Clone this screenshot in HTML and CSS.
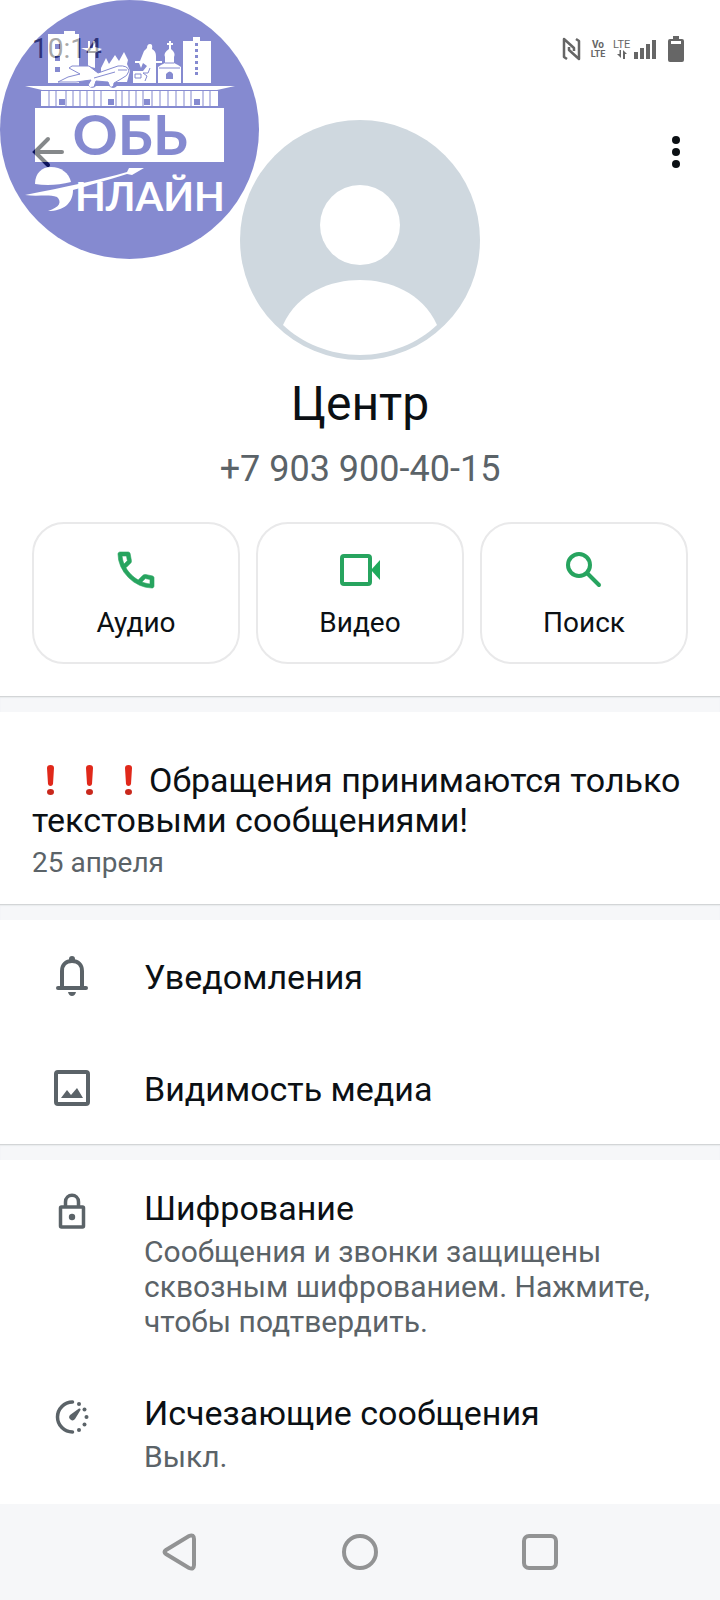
FILE: index.html
```
<!DOCTYPE html>
<html lang="ru">
<head>
  <meta charset="UTF-8" />
  <meta name="viewport" content="width=device-width, initial-scale=1" />
  <title>Центр</title>
  <link rel="stylesheet" href="styles.css">
</head>
<body>

<div class="status-bar">
  <span class="clock">10:14</span>
  <div class="status-icons">
    <svg class="nfc" width="20" height="28" viewBox="0 0 20 28" fill="none" stroke="#666" stroke-width="2.500" stroke-linejoin="round">
      <path d="M5 24 L2 22 V4 L12 13 V16"/>
      <path d="M14 4 L17 6 V24 L7 15 V12"/>
    </svg>
    <svg width="16" height="28" viewBox="0 0 16 28" class="status-text volte-icon">
      <text x="8" y="13" text-anchor="middle" class="volte">Vo</text>
      <text x="8" y="22" text-anchor="middle" class="volte-sub">LTE</text>
    </svg>
    <svg width="44" height="28" viewBox="0 0 44 28" fill="#666" class="status-text">
      <text x="0" y="13" class="lte">LTE</text>
      <path d="M8 15 V23 L4 19 H6.500 V15 Z M10 24 V15 L14 19 H12 V24 Z"/>
      <path d="M21 17 h4 v7 h-4z M27 13 h4 v11 h-4z M33 9 h4 v15 h-4z M39 5 h4 v19 h-4z"/>
    </svg>
    <svg class="battery" width="16" height="28" viewBox="0 0 16 28">
      <path fill="#666" fill-rule="evenodd" d="M5 1 H11 V4 H14 Q16 4 16 6 V25 Q16 27 14 27 H2 Q0 27 0 25 V6 Q0 4 2 4 H5 Z M3 6 V9 H13 V6 Z"/>
    </svg>
  </div>
</div>

<div class="profile">
  <div class="profile-top">
    <button class="icon-btn" aria-label="Назад">
      <svg width="48" height="48" viewBox="0 0 48 48" fill="none" stroke="#0b1014" stroke-width="4" stroke-linecap="round">
        <path d="M15 24 H42 M28 11 L15 24 L28 37"/>
      </svg>
    </button>
    <svg class="avatar" width="240" height="240" viewBox="0 0 240 240">
      <circle cx="120" cy="120" r="120" fill="#cfd8df"/>
      <circle cx="120" cy="105" r="40" fill="#fff"/>
      <path fill="#fff" d="M43 205 C58 172 91 160 120 160 C149 160 182 172 197 205 C178 223 150 235 120 235 C90 235 62 223 43 205 Z"/>
    </svg>
    <button class="icon-btn" aria-label="Ещё">
      <svg width="48" height="48" viewBox="0 0 48 48" fill="#0b1014">
        <circle cx="24" cy="12" r="4"/>
        <circle cx="24" cy="24" r="4"/>
        <circle cx="24" cy="36" r="4"/>
      </svg>
    </button>
  </div>
  <h1 class="name">Центр</h1>
  <div class="phone">+7 903 900-40-15</div>
  <div class="actions">
    <button class="action">
      <svg width="48" height="48" viewBox="0 0 24 24" fill="#27a45f" stroke="#27a45f" stroke-width=".3">
        <path d="M19.950 21q-3.125 0-6.175-1.362t-5.550-3.863q-2.500-2.500-3.862-5.550T3 4.050q0-.45.300-.75t.750-.3H8.100q.35 0 .625.238t.325.562l.650 3.500q.05.400-.025.675T9.400 8.450L6.975 10.900q.5.925 1.187 1.787t1.513 1.663q.775.775 1.625 1.438T13.100 17l2.350-2.350q.225-.225.588-.337t.712-.063l3.450.700q.350.100.575.363T21 15.900v4.050q0 .450-.3.750t-.75.300M6.025 9l1.650-1.650L7.250 5H5.025q.125 1.025.350 2.025T6.025 9m8.950 8.950q.975.425 1.988.675T19 18.950v-2.200l-2.350-.475z"/>
      </svg>
      <span>Аудио</span>
    </button>
    <button class="action">
      <svg width="48" height="48" viewBox="0 0 48 48">
        <rect x="6" y="10" width="28" height="28" rx="2" fill="none" stroke="#27a45f" stroke-width="4"/>
        <path fill="#1faa5c" d="M35 24 L44 14 V34 Z"/>
      </svg>
      <span>Видео</span>
    </button>
    <button class="action">
      <svg width="48" height="48" viewBox="0 0 48 48" fill="none" stroke="#27a45f" stroke-width="4" stroke-linecap="round">
        <circle cx="19" cy="19" r="11"/>
        <path d="M28 28 L39 39"/>
      </svg>
      <span>Поиск</span>
    </button>
  </div>
</div>

<div class="divider"></div>

<div class="about">
  <div class="about-text">
    <svg class="mark" width="39" height="34" viewBox="0 0 39 34"><path fill="#e0281a" d="M15 4 Q15 1 18.500 1 Q22 1 22 4 L21 20 Q20.500 22 18.500 22 Q16.500 22 16 20 Z"/><ellipse cx="18.500" cy="28" rx="3.500" ry="3" fill="#c9281c"/></svg><svg class="mark" width="39" height="34" viewBox="0 0 39 34"><path fill="#e0281a" d="M15 4 Q15 1 18.500 1 Q22 1 22 4 L21 20 Q20.500 22 18.500 22 Q16.500 22 16 20 Z"/><ellipse cx="18.500" cy="28" rx="3.500" ry="3" fill="#c9281c"/></svg><svg class="mark" width="39" height="34" viewBox="0 0 39 34"><path fill="#e0281a" d="M15 4 Q15 1 18.500 1 Q22 1 22 4 L21 20 Q20.500 22 18.500 22 Q16.500 22 16 20 Z"/><ellipse cx="18.500" cy="28" rx="3.500" ry="3" fill="#c9281c"/></svg>Обращения принимаются только текстовыми сообщениями!
  </div>
  <div class="about-date">25 апреля</div>
</div>

<div class="divider"></div>

<div class="list">
  <div class="row single">
    <svg width="48" height="48" viewBox="0 0 48 48" fill="none" stroke="#5b6368" stroke-width="4">
      <path d="M14 35 V19 C14 13 18 9 24 9 C30 9 34 13 34 19 V35"/>
      <path d="M10 36 H38" stroke-linecap="round"/>
      <path fill="#5b6368" stroke="none" d="M21 9 V7 Q21 4 24 4 Q27 4 27 7 V9 Z M20 40 H28 Q27 44 24 44 Q21 44 20 40 Z"/>
    </svg>
    <div class="row-title">Уведомления</div>
  </div>
  <div class="row single">
    <svg width="48" height="48" viewBox="0 0 48 48">
      <rect x="8" y="8" width="32" height="32" rx="2" fill="none" stroke="#5b6368" stroke-width="4"/>
      <path fill="#5b6368" d="M13 34 L19 26 L23 31 L29 24 L35 34 Z"/>
    </svg>
    <div class="row-title">Видимость медиа</div>
  </div>
</div>

<div class="divider"></div>

<div class="list">
  <div class="row">
    <svg width="48" height="48" viewBox="0 0 48 48" fill="none" stroke="#5b6368" stroke-width="3.500">
      <rect x="12.500" y="19" width="23" height="20" rx="1"/>
      <path d="M17.500 19 V14 C17.500 5 30.500 5 30.500 14 V19"/>
      <circle cx="24" cy="29" r="3.200" fill="#5b6368" stroke="none"/>
    </svg>
    <div>
      <div class="row-title">Шифрование</div>
      <div class="row-sub">Сообщения и звонки защищены сквозным шифрованием. Нажмите, чтобы подтвердить.</div>
    </div>
  </div>
  <div class="row">
    <svg width="48" height="48" viewBox="0 0 48 48" fill="#5b6368">
      <path d="M24.500 9 A15 15 0 0 0 24.500 39" fill="none" stroke="#5b6368" stroke-width="3.500" stroke-linecap="round"/>
      <path d="M22 22 L31 15.500 Q33 15 32.500 17 L27 26 A3.200 3.200 0 1 1 22 22 Z"/>
      <circle cx="31" cy="11" r="2"/>
      <circle cx="36.500" cy="16.500" r="2"/>
      <circle cx="38.500" cy="24" r="2"/>
      <circle cx="36.500" cy="31.500" r="2"/>
      <circle cx="31" cy="37" r="2"/>
    </svg>
    <div>
      <div class="row-title">Исчезающие сообщения</div>
      <div class="row-sub">Выкл.</div>
    </div>
  </div>
</div>

<div class="nav-bar">
  <button class="nav-btn" aria-label="Назад">
    <svg width="48" height="48" viewBox="0 0 48 48"><path d="M10 22 L33 8 Q38 6 38 11 V37 Q38 42 33 40 L10 26 Q7 24 10 22 Z"/></svg>
  </button>
  <button class="nav-btn" aria-label="Домой">
    <svg width="48" height="48" viewBox="0 0 48 48"><circle cx="24" cy="24" r="16"/></svg>
  </button>
  <button class="nav-btn" aria-label="Недавние">
    <svg width="48" height="48" viewBox="0 0 48 48"><rect x="8" y="8" width="32" height="32" rx="5"/></svg>
  </button>
</div>

<!-- channel watermark -->
<svg class="watermark" width="260" height="260" viewBox="0 0 260 260">
  <circle cx="129.500" cy="129.500" r="129.500" fill="#0d17a3"/>
  <g fill="#fff">
    <!-- tower blocks -->
    <path fill-rule="evenodd" d="M48 83 V34 H64 V31 H75 V34 H79 V83 Z M55 44 V49 H60 V44 Z M55 56 V61 H60 V56 Z M55 67 V72 H60 V67 Z"/>
    <path fill-rule="evenodd" d="M183 83 V41 H193 V37 H200 V41 H211 V83 Z M195 43v3h3v-3z M195 49v3h3v-3z M195 55v3h3v-3z M195 61v3h3v-3z M195 67v3h3v-3z M195 72v3h3v-3z"/>
    <!-- monument, trees -->
    <path d="M88 66 V51 L81 48 L88 48 V41 H90 V48 H93 V41 H95 V47 L102 49 L95 53 V68 Z"/>
    <path d="M101 68 L106 58 L109 64 L115 55 L119 61 L124 52 L128 60 L127 64 L130 71 L127 82 H101 Z"/>
    <!-- statue -->
    <path d="M147 48 Q147 44 150 44 Q153 44 152 49 Q156 51 156 56 V61 H162 V63 H156 V83 H133 V71 H143 L147 66 L143 63 L141 68 L139 63 H135 V61 H140 L144 51 Z"/>
    <!-- church -->
    <path fill-rule="evenodd" d="M158 83 V67 L161 65 L165 63 V57 Q163 53 169 49 V45 H167 V43 H169 V41 H171 V43 H173 V45 H171 V49 Q176 53 174 57 V63 L178 65 L181 67 V83 Z M166 79 V74 Q170 69 173 74 V79 Z"/>
  </g>
  <path d="M135 74 h6 v4 h-6z M159 68 H180 M165 63 H174" fill="none" stroke="#0d17a3"/>
  <path d="M150 68 L148 73 H143 L147 76 L145 81" fill="none" stroke="#0d17a3"/>
  <!-- plane -->
  <path fill="#fff" stroke="#0d17a3" d="M58 82 L68 77 L80 74 L69 68 L72 66 H89 L98 73 L118 66 Q128 65 129 71 Q128 76 121 79 L114 83 Q114 88 110 87 L108 82 L96 81 L94 87 Q90 89 88 85 L91 80 L76 82 Z"/>
  <path d="M94 78 L115 72 M118 70 H127" fill="none" stroke="#0d17a3"/>
  <g fill="#fff">
    <!-- station roof and hall -->
    <path d="M25 86 H89 Q92 90 96 86 H109 Q113 90 117 86 H235 L217 90 H42 Z"/>
    <path d="M41 91 H218 V106 H41 Z"/>
    <path d="M35 107 H224 V162 H35 Z"/>
  </g>
  <g fill="none" stroke="#0d17a3">
    <path stroke-width="1" d="M49 91v15 M56 91v15 M66 91v15 M73 91v15 M80 91v15 M87 91v15 M94 91v15 M101 91v15 M116 91v15 M122 91v15 M129 91v15 M136 91v15 M143 91v15 M152 91v15 M160 91v15 M168 91v15 M176 91v15 M184 91v15 M191 91v15 M203 91v15 M210 91v15"/>
    <path stroke-width="6" d="M62 99v6 M111 99v6 M147 99v6 M197 99v6"/>
    <path stroke-width="2" d="M35 107 H224"/>
  </g>
  <text class="mark-top" x="130" y="155" text-anchor="middle">ОБЬ</text>
  <text class="mark-bottom" x="75" y="211">НЛАЙН</text>
  <g fill="#fff">
    <path d="M35 184 C35 173 42 167 51 167 C61 167 69 173 71 182 C59 185 47 186 35 184 Z"/>
    <path d="M25 195 C65 187 100 180 127 172 L129 168 L144 168 L132 175 L127 174 C105 181 90 185 73 190 C73 203 64 211 48 211 C60 207 62 202 57 197 C48 194 38 197 25 195 Z"/>
  </g>
</svg>

</body>
</html>
```

FILE: styles.css
```
* {
  box-sizing: border-box;
}

body {
  margin: 0;
  min-height: 100vh;
  display: flex;
  flex-direction: column;
  background: #fff;
  color: #0b1014;
  font-family: Roboto, "Noto Sans", sans-serif;
  position: relative;
}

svg {
  display: block;
  flex-shrink: 0;
}

button {
  font: inherit;
  color: inherit;
  background: none;
  border: none;
  padding: 0;
  cursor: pointer;
}

/* Status bar */
.status-bar {
  height: 96px;
  padding: 2px 36px 0 32px;
  display: flex;
  align-items: center;
  justify-content: space-between;
  color: #505050;
}

.clock {
  font-size: 28px;
  line-height: 34px;
}

.status-icons {
  display: flex;
  align-items: center;
}

.nfc {
  margin-right: 8px;
}

.battery {
  margin-left: 9px;
}

.status-text {
  overflow: visible;
  fill: #666;
  margin-right: 2px;
}

.volte-icon {
  margin-right: 7px;
}

.volte {
  font-size: 10px;
  font-weight: bold;
}

.volte-sub {
  font-size: 9px;
  font-weight: bold;
}

.lte {
  font-size: 11px;
}

/* Profile */
.profile {
  padding: 24px 32px 32px;
  text-align: center;
}

.profile-top {
  display: flex;
  justify-content: space-between;
  align-items: flex-start;
  margin: 0 -12px;
}

.icon-btn {
  margin-top: 8px;
}

.name {
  margin: 16px 0;
  font-size: 48px;
  line-height: 56px;
  font-weight: 400;
}

.phone {
  font-size: 36px;
  line-height: 42px;
  color: #5b6368;
}

.actions {
  display: flex;
  gap: 16px;
  margin-top: 32px;
}

.action {
  flex: 1;
  display: flex;
  flex-direction: column;
  align-items: center;
  gap: 12px;
  padding: 22px 0;
  border: 2px solid #e9e9ea;
  border-radius: 32px;
  font-size: 28px;
  line-height: 34px;
}

.divider {
  height: 16px;
  background: #f6f7f9;
  border-top: 1px solid #d3d5d7;
  box-shadow: inset 0 1px 1px #e9ebed;
}

/* About */
.about {
  padding: 48px 32px 24px;
}

.about-text {
  font-size: 34px;
  line-height: 40px;
}

.mark {
  display: inline-block;
  vertical-align: -6px;
}

.about-date {
  margin-top: 6px;
  font-size: 28px;
  line-height: 34px;
  color: #5b6368;
}

/* Settings rows */
.row {
  display: flex;
  align-items: flex-start;
  gap: 48px;
  padding: 28px 48px 26px;
}

.single {
  align-items: center;
  padding: 32px 48px;
}

.row-title {
  font-size: 34px;
  line-height: 40px;
}

.single .row-title {
  padding-top: 2px;
}

.row-sub {
  margin-top: 6px;
  font-size: 30px;
  line-height: 35px;
  color: #5b6368;
}

/* System navigation */
.nav-bar {
  margin-top: auto;
  height: 96px;
  padding: 0 90px;
  display: flex;
  background: #f6f7f9;
}

.nav-btn {
  flex: 1;
  display: flex;
  align-items: center;
  justify-content: center;
}

.nav-btn svg {
  fill: none;
  stroke: #929394;
  stroke-width: 4px;
}

.watermark {
  position: absolute;
  top: 0;
  left: 0;
  opacity: 0.5;
  pointer-events: none;
}

.mark-top,
.mark-bottom {
  font-family: Lato, "Open Sans", sans-serif;
  font-weight: bold;
}

.mark-top {
  font-size: 56px;
  fill: #0d17a3;
}

.mark-bottom {
  font-size: 40px;
  fill: #fff;
}
```
